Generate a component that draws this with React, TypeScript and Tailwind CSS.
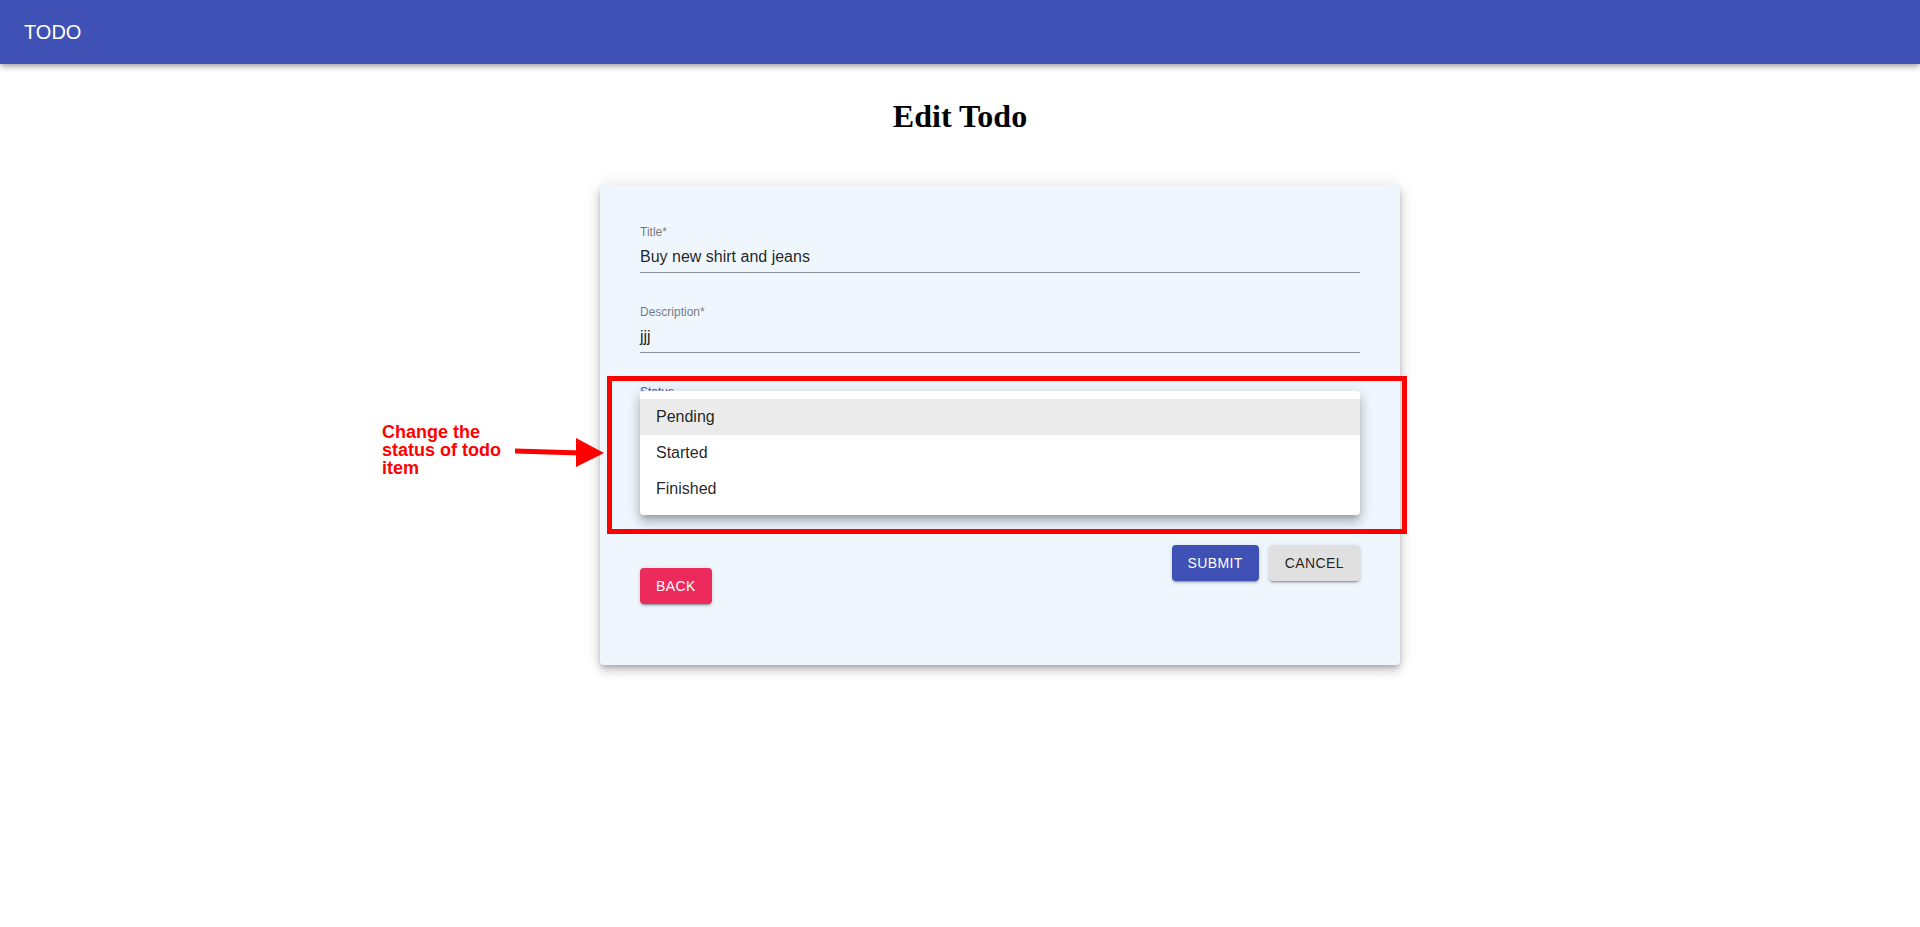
import React from 'react';

interface FieldProps {
  label: string;
  value: string;
  focused?: boolean;
}

function TextField({ label, value, focused }: FieldProps) {
  return (
    <div className="relative h-[48px] w-full">
      <label
        className={`absolute left-0 top-[1px] text-[12px] leading-[12px] ${
          focused ? 'text-[#3f51b5]' : 'text-[rgba(0,0,0,0.54)]'
        }`}
      >
        {label}
      </label>
      <div className="absolute inset-x-0 top-[16px] h-[32px] border-b border-[rgba(0,0,0,0.42)]">
        <div className="pt-[6px] text-[16px] leading-[19px] text-[rgba(0,0,0,0.87)]">{value}</div>
      </div>
    </div>
  );
}

const btnShadow =
  'shadow-[0_3px_1px_-2px_rgba(0,0,0,0.2),0_2px_2px_0_rgba(0,0,0,0.14),0_1px_5px_0_rgba(0,0,0,0.12)]';

export default function App() {
  const statuses = ['Pending', 'Started', 'Finished'];

  return (
    <div className="min-h-[927px] bg-white font-['Liberation_Sans',Arial,sans-serif]">
      {/* App bar */}
      <header className="flex h-16 items-center bg-[#3f51b5] px-6 shadow-[0_2px_4px_-1px_rgba(0,0,0,0.2),0_4px_5px_0_rgba(0,0,0,0.14),0_1px_10px_0_rgba(0,0,0,0.12)]">
        <span className="text-[20px] leading-none text-white">TODO</span>
      </header>

      <h1 className="mt-[34px] mb-[51px] text-center font-['Liberation_Serif',serif] text-[32px] font-bold leading-[36px] text-black">
        Edit Todo
      </h1>

      {/* Card */}
      <div className="relative ml-[600px] w-[800px] rounded bg-[#eff6fe] px-10 pt-10 pb-[61px] shadow-[0_3px_5px_-1px_rgba(0,0,0,0.2),0_6px_10px_0_rgba(0,0,0,0.14),0_1px_18px_0_rgba(0,0,0,0.12)]">
        <div className="flex flex-col gap-8">
          <TextField label="Title*" value="Buy new shirt and jeans" />
          <TextField label="Description*" value="jjj" />

          {/* Status select with open menu */}
          <div className="relative">
            <TextField label="Status" value="" focused />
            <div className="absolute left-0 top-[6px] z-10 w-full rounded bg-white py-2 shadow-[0_5px_5px_-3px_rgba(0,0,0,0.2),0_8px_10px_1px_rgba(0,0,0,0.14),0_3px_14px_2px_rgba(0,0,0,0.12)]">
              {statuses.map((s, i) => (
                <div
                  key={s}
                  className={`flex h-9 items-center px-4 text-[16px] text-[rgba(0,0,0,0.87)] ${
                    i === 0 ? 'bg-[#ebebeb]' : ''
                  }`}
                >
                  {s}
                </div>
              ))}
            </div>
          </div>
        </div>

        {/* Buttons */}
        <div className="mt-[112px] flex items-start justify-between">
          <div className="pt-[23px]">
            <button className={`h-9 rounded bg-[#ec2a5c] px-4 text-[14px] uppercase tracking-[0.4px] text-white ${btnShadow}`}>
              Back
            </button>
          </div>
          <div className="flex gap-[10px]">
            <button className={`h-9 rounded bg-[#3f51b5] px-4 text-[14px] uppercase tracking-[0.4px] text-white ${btnShadow}`}>
              Submit
            </button>
            <button className={`h-9 rounded bg-[#e0e0e0] px-4 text-[14px] uppercase tracking-[0.4px] text-[rgba(0,0,0,0.87)] ${btnShadow}`}>
              Cancel
            </button>
          </div>
        </div>

        {/* Annotation overlay */}
        <div className="pointer-events-none absolute left-[7px] top-[191px] z-20 h-[158px] w-[800px] border-[5px] border-[#ff0000]" />
        <div className="absolute left-[-218px] top-[238px] w-[140px] text-[18px] font-bold leading-[18px] text-[#ff0000]">
          Change the
          <br />
          status of todo
          <br />
          item
        </div>
        <svg
          className="absolute left-[-85px] top-[252px]"
          width="92"
          height="32"
          viewBox="0 0 92 32"
        >
          <line x1="0" y1="14" x2="66" y2="16" stroke="#ff0000" strokeWidth="5" />
          <polygon points="61,1 89,16 61,30" fill="#ff0000" />
        </svg>
      </div>
    </div>
  );
}
